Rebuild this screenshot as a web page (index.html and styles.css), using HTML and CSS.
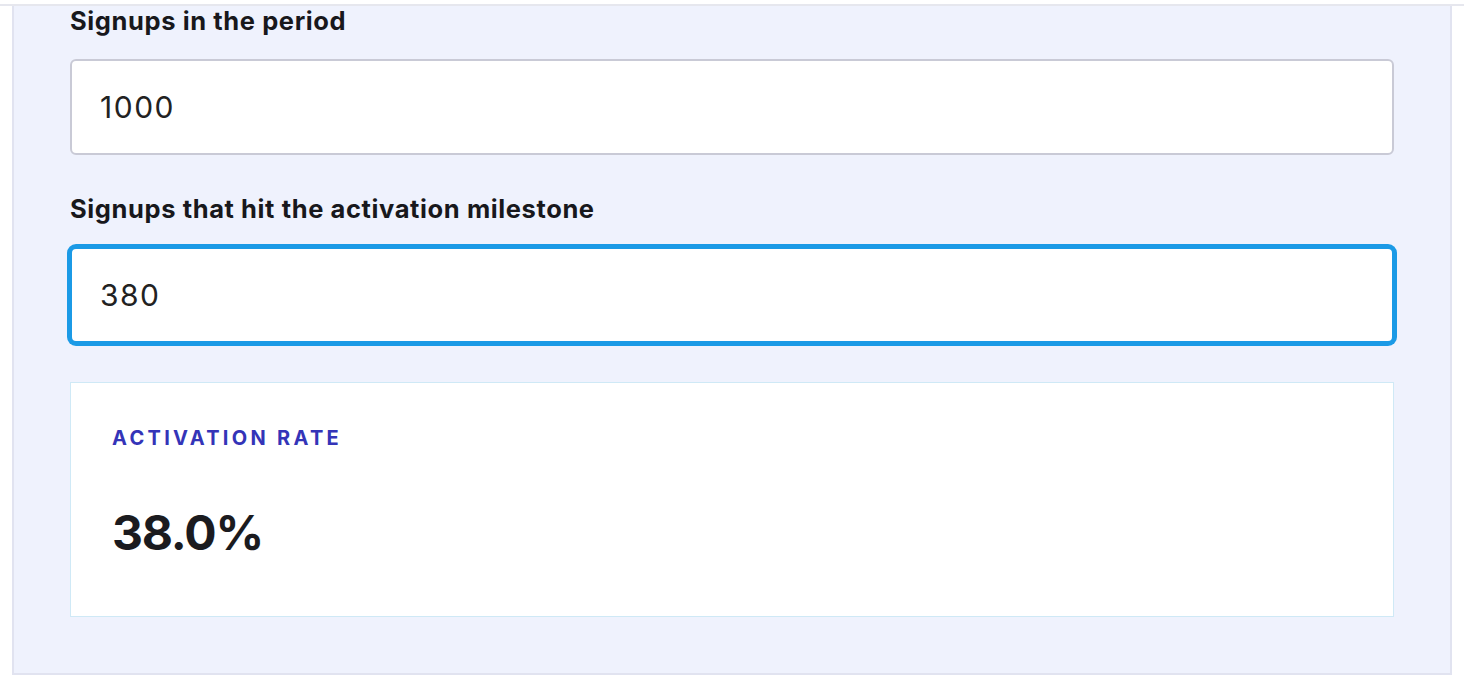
FILE: index.html
```html
<!DOCTYPE html>
<html lang="en">
<head>
    <meta charset="UTF-8">
    <meta name="viewport" content="width=device-width, initial-scale=1.0">
    <title>Activation rate calculator</title>
    <link rel="stylesheet" href="styles.css">
</head>
<body>
    <div class="top-rule"></div>

    <!-- Calculator panel -->
    <section class="calculator">
        <div class="field">
            <label for="signups">Signups in the period</label>
            <input id="signups" type="text" value="1000">
        </div>
        <div class="field">
            <label for="activated">Signups that hit the activation milestone</label>
            <input id="activated" class="focused" type="text" value="380">
        </div>
        <div class="result">
            <p class="result-label">Activation rate</p>
            <p class="result-value">38.0%</p>
        </div>
    </section>
</body>
</html>
```

FILE: styles.css
```css
/* General styling */
* {
    margin: 0;
    padding: 0;
    box-sizing: border-box;
}
body {
    background: #fff;
    font-family: Inter, 'Liberation Sans', sans-serif;
    color: #1b1b1f;
}
.top-rule {
    height: 6px;
    border-bottom: 2px solid #e6e7ee;
}
/* Panel */
.calculator {
    display: flex;
    flex-direction: column;
    gap: 39px;
    margin: 0 12px;
    padding: 0 56px 56px;
    background: #eff2fd;
    border: 2px solid #e1e3f0;
    border-top: none;
}
.field {
    display: flex;
    flex-direction: column;
    gap: 24px;
}
label {
    font-size: 25.5px;
    line-height: 29px;
    font-weight: 700;
    letter-spacing: 0.6px;
    color: #18181c;
}
input {
    width: 100%;
    height: 96px;
    padding: 0 28px;
    font-family: Inter, 'Liberation Sans', sans-serif;
    font-size: 30px;
    letter-spacing: 1.5px;
    color: #222;
    background: #fff;
    border: 2px solid #c9cad6;
    border-radius: 6px;
    outline: none;
}
input.focused {
    border-color: #1b9ae6;
    box-shadow: 0 0 0 3px #1b9ae6;
}
/* Result */
.result {
    display: flex;
    flex-direction: column;
    gap: 54px;
    padding: 43px 41px 54px;
    background: #fff;
    border: 1px solid #cfe9f6;
}
.result-label {
    font-size: 20px;
    line-height: 24px;
    font-weight: 700;
    letter-spacing: 3.3px;
    text-transform: uppercase;
    color: #3434b8;
}
.result-value {
    font-size: 48px;
    line-height: 58px;
    font-weight: 700;
    letter-spacing: -1.2px;
    color: #1b1b1f;
}
```
